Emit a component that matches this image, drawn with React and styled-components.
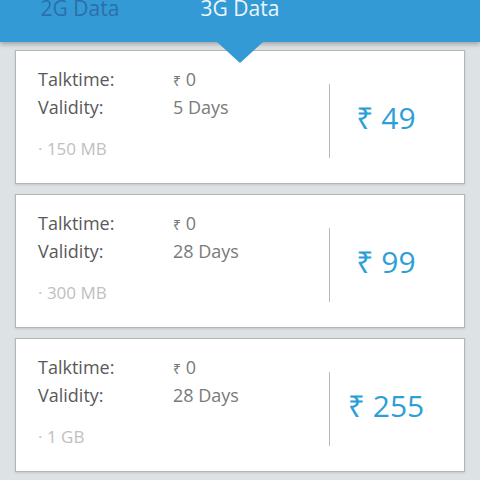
import styled, {createGlobalStyle} from 'styled-components'

const tabsList = [
  {tabId: '2G', displayText: '2G Data'},
  {tabId: '3G', displayText: '3G Data'},
]

const plansList = [
  {id: 1, talktime: '0', validity: '5 Days', data: '150 MB', price: '49'},
  {id: 2, talktime: '0', validity: '28 Days', data: '300 MB', price: '99'},
  {id: 3, talktime: '0', validity: '28 Days', data: '1 GB', price: '255'},
]

const activeTab = '3G'

const App = () => (
  <>
    <GlobalStyle />
    <Page>
      <Header>
        {tabsList.map(each => (
          <Tab key={each.tabId} isActive={each.tabId === activeTab}>
            {each.displayText}
            {each.tabId === activeTab && <Pointer />}
          </Tab>
        ))}
      </Header>
      <PlanList>
        {plansList.map(each => (
          <PlanCard key={each.id}>
            <Details>
              <Row>
                <Label>Talktime:</Label>
                <Value>
                  <SmallRupee>₹</SmallRupee> {each.talktime}
                </Value>
              </Row>
              <Row>
                <Label>Validity:</Label>
                <Value>{each.validity}</Value>
              </Row>
              <DataText>· {each.data}</DataText>
            </Details>
            <PriceBox>
              <Price>₹ {each.price}</Price>
            </PriceBox>
          </PlanCard>
        ))}
      </PlanList>
    </Page>
  </>
)

export default App

const GlobalStyle = createGlobalStyle`
  * {
    box-sizing:border-box;
  }
  body {
    margin:0;
    background-color:#dde2e5;
    font-family:"Open Sans", "Noto Sans", sans-serif;
  }
`

const Page = styled.div`
  width:480px;
  height:480px;
  overflow:hidden;
  background-color:#dde2e5;
`

const Header = styled.div`
  position:relative;
  z-index:2;
  height:42px;
  display:flex;
  background-color:#349ad5;
  box-shadow:0 2px 5px rgba(0, 0, 0, 0.3);
`

const Tab = styled.div`
  position:relative;
  width:160px;
  text-align:center;
  font-size:21px;
  line-height:21px;
  margin-top:-2px;
  color:${props => (props.isActive ? '#eaf5fc' : '#2b6fa8')};
`

const Pointer = styled.div`
  position:absolute;
  left:50%;
  top:44px;
  margin-left:-23px;
  width:0;
  height:0;
  border-left:23px solid transparent;
  border-right:23px solid transparent;
  border-top:21px solid #349ad5;
`

const PlanList = styled.ul`
  list-style:none;
  margin:8px 0 0;
  padding:0 15px;
  display:flex;
  flex-direction:column;
  row-gap:10px;
`

const PlanCard = styled.li`
  height:134px;
  display:flex;
  background-color:#ffffff;
  border:1px solid #b4b6b8;
  box-shadow:0 1px 2px rgba(0, 0, 0, 0.12);
`

const Details = styled.div`
  width:313px;
  padding:15px 0 0 22px;
  display:flex;
  flex-direction:column;
`

const Row = styled.div`
  display:flex;
  font-size:18px;
  line-height:27px;
`

const Label = styled.span`
  width:135px;
  color:#595959;
`

const Value = styled.span`
  color:#7a7a7a;
`

const SmallRupee = styled.span`
  font-size:14px;
`

const DataText = styled.p`
  margin:18px 0 0;
  font-size:17px;
  line-height:20px;
  color:#c0c0c0;
`

const PriceBox = styled.div`
  flex:1;
  margin-top:33px;
  height:74px;
  border-left:1px solid #b8b8b8;
  padding-right:22px;
  display:flex;
  align-items:center;
  justify-content:center;
`

const Price = styled.span`
  margin-top:-8px;
  font-size:30px;
  color:#2d9fd8;
`
